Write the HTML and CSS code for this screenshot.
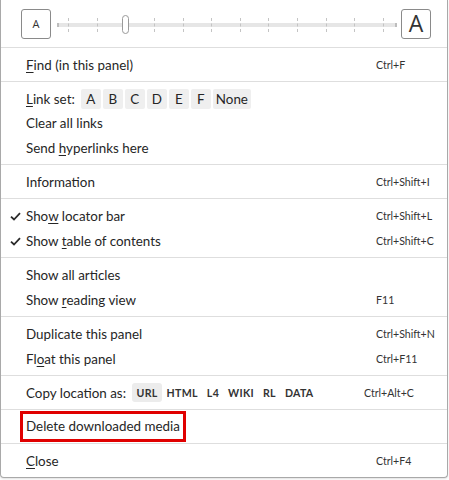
FILE: index.html
```html
<!DOCTYPE html>
<html>
<head>
<meta charset="utf-8">
<link rel="stylesheet" href="styles.css">
</head>
<body>
<div class="panel">
  <div class="zoom-bar">
    <div class="abtn abtn-small">A</div>
    <div class="slider">
      <div class="track"><span class="end"></span><span class="end"></span></div>
      <div class="ticks">
        <span class="tick"></span><span class="tick"></span><span class="tick"></span><span class="tick"></span>
        <span class="tick"></span><span class="tick"></span><span class="tick"></span><span class="tick"></span>
        <span class="tick"></span><span class="tick"></span><span class="tick"></span><span class="tick"></span>
      </div>
      <div class="thumb"></div>
    </div>
    <div class="abtn abtn-large">A</div>
  </div>

  <div class="section">
    <div class="item"><span class="gutter"></span><span class="label"><u>F</u>ind (in this panel)</span><span class="key">Ctrl+F</span></div>
  </div>

  <div class="section">
    <div class="item item-links"><span class="gutter"></span><span class="label"><u>L</u>ink set:</span>
      <span class="chips">
        <span class="chip">A</span><span class="chip">B</span><span class="chip">C</span><span class="chip">D</span><span class="chip">E</span><span class="chip">F</span><span class="chip chip-wide">None</span>
      </span>
    </div>
    <div class="item"><span class="gutter"></span><span class="label">Clear all links</span></div>
    <div class="item"><span class="gutter"></span><span class="label">Send <u>h</u>yperlinks here</span></div>
  </div>

  <div class="section">
    <div class="item"><span class="gutter"></span><span class="label">Information</span><span class="key">Ctrl+Shift+I</span></div>
  </div>

  <div class="section">
    <div class="item"><span class="gutter"><svg class="check" width="11" height="9" viewBox="0 0 11 9"><path d="M1 4.6 L4 7.5 L10 1.2" fill="none" stroke="#2a2a2a" stroke-width="1.8"/></svg></span><span class="label">Sho<u>w</u> locator bar</span><span class="key">Ctrl+Shift+L</span></div>
    <div class="item"><span class="gutter"><svg class="check" width="11" height="9" viewBox="0 0 11 9"><path d="M1 4.6 L4 7.5 L10 1.2" fill="none" stroke="#2a2a2a" stroke-width="1.8"/></svg></span><span class="label">Show <u>t</u>able of contents</span><span class="key">Ctrl+Shift+C</span></div>
  </div>

  <div class="section">
    <div class="item"><span class="gutter"></span><span class="label">Show all articles</span></div>
    <div class="item"><span class="gutter"></span><span class="label">Show <u>r</u>eading view</span><span class="key">F11</span></div>
  </div>

  <div class="section">
    <div class="item"><span class="gutter"></span><span class="label">Duplicate this panel</span><span class="key">Ctrl+Shift+N</span></div>
    <div class="item"><span class="gutter"></span><span class="label">Fl<u>o</u>at this panel</span><span class="key">Ctrl+F11</span></div>
  </div>

  <div class="section">
    <div class="item item-copy"><span class="gutter"></span><span class="label">Copy location as:</span>
      <span class="formats">
        <span class="fmt fmt-active">URL</span><span class="fmt">HTML</span><span class="fmt">L4</span><span class="fmt">WIKI</span><span class="fmt">RL</span><span class="fmt">DATA</span>
      </span>
      <span class="key key-copy">Ctrl+Alt+C</span>
    </div>
  </div>

  <div class="section">
    <div class="item"><span class="gutter"></span><span class="label"><span class="highlight">Delete downloaded media</span></span></div>
  </div>

  <div class="section">
    <div class="item"><span class="gutter"></span><span class="label"><u>C</u>lose</span><span class="key">Ctrl+F4</span></div>
  </div>
</div>
</body>
</html>
```

FILE: styles.css
```css
html, body {
  margin: 0;
  padding: 0;
  background: #ffffff;
}

body {
  font-family: Lato, "Noto Sans", sans-serif;
  color: #262626;
  width: 449px;
  height: 480px;
  overflow: hidden;
}

.panel {
  width: 446px;
  border: 1px solid #a9a9a9;
  border-top: none;
  border-radius: 0 0 4px 4px;
  background: #fff;
  box-shadow: 0 1px 2px rgba(0,0,0,0.12);
}

.zoom-bar {
  display: flex;
  align-items: center;
  padding: 0 16px 0 20px;
  border-bottom: 1px solid #dedede;
  box-sizing: border-box;
  height: 48px;
}

.abtn {
  width: 30px;
  height: 30px;
  box-sizing: border-box;
  border: 1px solid #8a8a8a;
  border-radius: 3px;
  display: flex;
  align-items: center;
  justify-content: center;
  color: #333;
  flex: none;
  font-family: "Open Sans", sans-serif;
}

.abtn-small { font-size: 11px; }
.abtn-large { font-size: 23px; line-height: 1; padding-bottom: 1px; }

.slider {
  flex: 1;
  height: 30px;
  position: relative;
  margin: 0 4px 0 6px;
}

.track {
  position: absolute;
  left: 0;
  right: 0;
  top: 14px;
  height: 4px;
  background: #e6e6e6;
  display: flex;
  justify-content: space-between;
}

.end {
  width: 2px;
  height: 4px;
  background: #bdbdbd;
}

.ticks {
  position: absolute;
  left: 11px;
  right: 13px;
  top: 9px;
  height: 14px;
  display: flex;
  justify-content: space-between;
}

.tick {
  width: 0;
  border-left: 1px dashed #c4c4c4;
}

.thumb {
  position: absolute;
  left: 65px;
  top: 6px;
  width: 7px;
  height: 19px;
  box-sizing: border-box;
  border: 1px solid #9a9a9a;
  border-radius: 4px;
  background: #fff;
}

.section {
  padding: 4px 0;
  border-bottom: 1px solid #dedede;
}

.section:last-child {
  border-bottom: none;
}

.item {
  display: flex;
  align-items: center;
  height: 25px;
  font-size: 13.4px;
}

.item-links {
  height: 22px;
  padding-top: 2px;
}

.gutter {
  width: 25px;
  flex: none;
  display: flex;
  align-items: center;
  padding-left: 9px;
  box-sizing: border-box;
}

.check { display: block; margin-top: 1px; }

.label {
  flex: 1;
  white-space: nowrap;
}

u {
  text-decoration-thickness: 1px;
  text-underline-offset: 2px;
}

.item-links .label,
.item-copy .label {
  flex: none;
}

.key {
  width: 71px;
  flex: none;
  font-size: 10.6px;
  color: #333;
}

.chips {
  display: flex;
  gap: 2px;
  margin-left: 6px;
}

.chip {
  min-width: 20px;
  height: 20px;
  background: #efefef;
  border-radius: 2px;
  display: flex;
  align-items: center;
  justify-content: center;
  font-size: 13.4px;
  box-sizing: border-box;
}

.chip-wide {
  padding: 0 3px;
}

.formats {
  display: flex;
  margin-left: 6px;
  gap: 0;
}

.fmt {
  height: 19px;
  padding: 0 4.5px;
  display: flex;
  align-items: center;
  font-size: 10.6px;
  font-weight: bold;
  letter-spacing: 0.3px;
  color: #333;
  border-radius: 3px;
}

.fmt-active {
  background: #ececec;
}

.key-copy {
  margin-left: 46px;
  width: auto;
}

.highlight {
  display: inline-block;
  line-height: 19px;
  outline: 3px solid #e00000;
  outline-offset: 3px;
}
```
